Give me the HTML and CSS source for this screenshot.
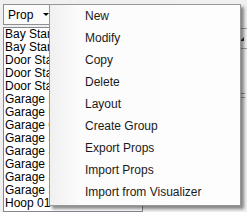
FILE: index.html
```html
<!DOCTYPE html>
<html>
<head>
<meta charset="utf-8">
<link rel="stylesheet" href="styles.css">
</head>
<body>
<div class="window">
  <div class="side">
    <div class="combo"><span class="combo-text">Prop</span><span class="arrow"></span></div>
    <ul class="list">
      <li>Bay Star 01</li>
      <li>Bay Star 02</li>
      <li>Door Star 01</li>
      <li>Door Star 02</li>
      <li>Door Star 03</li>
      <li>Garage Left</li>
      <li>Garage Right</li>
      <li>Garage Center</li>
      <li>Garage Star 01</li>
      <li>Garage Star 02</li>
      <li>Garage Star 03</li>
      <li>Garage Star 04</li>
      <li>Garage Star 05</li>
      <li>Hoop 01</li>
    </ul>
  </div>
  <div class="pane">
    <div class="pane-head"><span class="sort"></span></div>
    <div class="pane-body"><span class="grip"></span></div>
  </div>
  <ul class="menu">
    <li>New</li>
    <li>Modify</li>
    <li>Copy</li>
    <li>Delete</li>
    <li>Layout</li>
    <li>Create Group</li>
    <li>Export Props</li>
    <li>Import Props</li>
    <li>Import from Visualizer</li>
  </ul>
</div>
</body>
</html>
```

FILE: styles.css
```css
html, body {
  margin: 0;
  padding: 0;
  background: #f0f0f0;
  overflow: hidden;
}

.window {
  position: relative;
  display: flex;
  width: 247px;
  height: 212px;
  padding: 4px 0 0 3px;
  box-sizing: border-box;
  font-family: "Liberation Sans", Arial, sans-serif;
  font-size: 12px;
  color: #000;
}

.side {
  display: flex;
  flex-direction: column;
  gap: 2px;
  width: 140px;
}

.combo {
  display: flex;
  align-items: center;
  justify-content: space-between;
  width: 52px;
  height: 21px;
  box-sizing: border-box;
  border: 1px solid #8f8f8f;
  background: #fbfbfb;
  padding: 0 3px 0 4px;
}

.combo-text {
  font-size: 12px;
  line-height: 14px;
}

.arrow {
  width: 0;
  height: 0;
  border-left: 3px solid transparent;
  border-right: 3px solid transparent;
  border-top: 3px solid #000;
  margin-right: 2px;
}

.list {
  list-style: none;
  margin: 0;
  padding: 0 0 0 1px;
  border: 1px solid #828790;
  background: #fff;
  flex: 1;
}

.list li {
  height: 13px;
  line-height: 13px;
  white-space: nowrap;
  overflow: hidden;
}

.pane {
  flex: 1;
  margin-top: 24px;
  display: flex;
  flex-direction: column;
}

.pane-head {
  height: 19px;
  border-top: 1px solid #a0a0a0;
  border-bottom: 1px solid #a0a0a0;
  display: flex;
  justify-content: flex-end;
  align-items: center;
  padding-right: 3px;
}

.sort {
  width: 0;
  height: 0;
  border-left: 4px solid transparent;
  border-bottom: 4px solid #333;
}

.pane-body {
  flex: 1;
  display: flex;
  justify-content: flex-end;
  padding: 44px 2px 0 0;
}

.grip {
  width: 4px;
  height: 5px;
  border-top: 1px solid #999;
  border-bottom: 1px solid #999;
  box-sizing: border-box;
}

.menu {
  position: absolute;
  left: 49px;
  top: 4px;
  width: 192px;
  box-sizing: border-box;
  margin: 0;
  padding: 0 0 2px 0;
  list-style: none;
  border: 1px solid #979797;
  background: linear-gradient(to right, #f0f0f0 0, #f7f7f7 18px, #fcfcfc 30px, #fdfdfd 100%);
  box-shadow: 3px 3px 3px rgba(0, 0, 0, 0.45);
}

.menu li {
  height: 22px;
  line-height: 22px;
  padding-left: 35px;
  white-space: nowrap;
  color: #1a1a1a;
}
```
